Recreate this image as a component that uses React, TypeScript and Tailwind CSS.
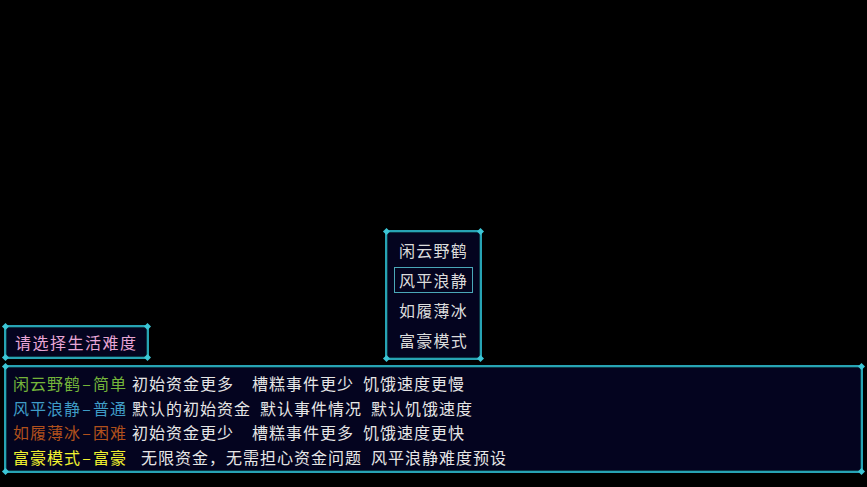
import React from "react";

const font = { fontFamily: '"Noto Sans CJK SC", "Noto Sans", sans-serif' };

// small diamond studs on the panel corners
const Corners: React.FC = () => (
  <>
    <span className="absolute -left-[3px] -top-[3px] h-[5px] w-[5px] rotate-45 bg-[#3cc6d6]" />
    <span className="absolute -right-[3px] -top-[3px] h-[5px] w-[5px] rotate-45 bg-[#3cc6d6]" />
    <span className="absolute -left-[3px] -bottom-[3px] h-[5px] w-[5px] rotate-45 bg-[#3cc6d6]" />
    <span className="absolute -right-[3px] -bottom-[3px] h-[5px] w-[5px] rotate-45 bg-[#3cc6d6]" />
  </>
);

const Panel: React.FC<{ className: string; children: React.ReactNode }> = ({ className, children }) => (
  <div
    className={
      "relative rounded-[3px] border-2 border-[#27a3b4] bg-[#04041f] shadow-[inset_0_0_0_1px_#0b3846] " +
      className
    }
  >
    <Corners />
    {children}
  </div>
);

const items = ["闲云野鹤", "风平浪静", "如履薄冰", "富豪模式"];

const rows = [
  { name: "闲云野鹤", level: "简单", color: "text-[#74b43a]", desc: "初始资金更多\u2002\u2002槽糕事件更少\u2002饥饿速度更慢" },
  { name: "风平浪静", level: "普通", color: "text-[#3f9cc6]", desc: "默认的初始资金\u2002默认事件情况\u2002默认饥饿速度" },
  { name: "如履薄冰", level: "困难", color: "text-[#b0501c]", desc: "初始资金更少\u2002\u2002槽糕事件更多\u2002饥饿速度更快" },
  { name: "富豪模式", level: "富豪", color: "text-[#f2f230]", desc: "\u2002无限资金，无需担心资金问题\u2002风平浪静难度预设" },
];

export default function App() {
  return (
    <div className="flex h-[487px] w-[867px] flex-col overflow-hidden bg-black px-[4px] pt-[230px]" style={font}>
      <div className="flex h-[130px] items-end gap-[236px]">
        <Panel className="mb-[1px] flex h-[34px] w-[145px] items-center pl-[9px]">
          <span className="text-[16px] leading-none tracking-[1.5px] text-[#e8a6d6]">请选择生活难度</span>
        </Panel>
        <Panel className="flex h-[130px] w-[97px] flex-col px-[7px] py-[3px]">
          {items.map((t, i) => (
            <div key={t} className="h-[30px] py-[2px]">
              <div
                className={
                  "flex h-full items-center justify-center text-[16px] leading-none tracking-[1.2px] text-[#dcdcdc] " +
                  (i === 1 ? "border border-[#4aa8b8]" : "border border-transparent")
                }
              >
                {t}
              </div>
            </div>
          ))}
        </Panel>
      </div>
      <Panel className="mt-[5px] flex h-[108px] w-[859px] flex-col px-[7px] pt-[4px]">
        {rows.map((r) => (
          <div key={r.name} className="flex h-[24.5px] items-center whitespace-pre text-[16px] leading-[24.5px] tracking-[1px]">
            <span className={r.color}>{r.name}</span>
            <span className={"inline-block w-[12px] text-center " + r.color}>–</span>
            <span className={r.color}>{r.level}</span>
            <span className="ml-[5px] text-[#e6e6e6]">{r.desc}</span>
          </div>
        ))}
      </Panel>
    </div>
  );
}
